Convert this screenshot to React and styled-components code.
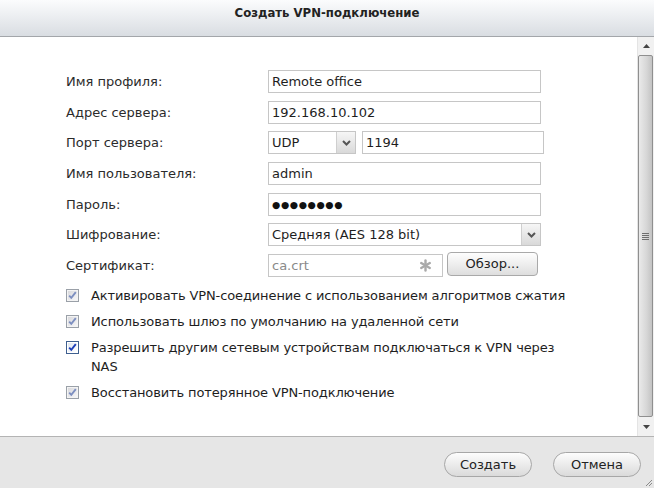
import React from "react";
import styled, { createGlobalStyle } from "styled-components";

const GlobalStyle = createGlobalStyle`
  html, body { margin: 0; padding: 0; width: 654px; height: 488px; overflow: hidden; background: #fff; }
  body { font-family: "DejaVu Sans", Verdana, sans-serif; font-size: 13px; color: #1e1e1e; }
  * { box-sizing: border-box; }
`;

const Dialog = styled.div`
  position: relative;
  width: 654px;
  height: 488px;
  display: flex;
  flex-direction: column;
`;

const TitleBar = styled.div`
  height: 37px;
  flex: none;
  border-bottom: 1px solid #a3a6aa;
  background: linear-gradient(#fbfcfd, #d9dde2);
  text-align: center;
  padding-top: 4px;
  line-height: 17px;
  font-family: "DejaVu Sans Condensed", "DejaVu Sans", sans-serif;
  font-stretch: condensed;
  font-weight: bold;
  font-size: 13px;
  color: #222;
`;

const Body = styled.div`
  height: 399px;
  flex: none;
  display: flex;
`;

const Content = styled.div`
  flex: 1;
  padding: 33px 0 0 66px;
`;

const Form = styled.div`
  display: grid;
  grid-template-columns: 202px auto;
  grid-auto-rows: 23px;
  row-gap: 7.67px;
`;

const Label = styled.div`
  line-height: 23px;
  color: #2b2b2b;
`;

const Field = styled.div`
  width: ${(p) => p.$w || 273}px;
  height: 23px;
  border: 1px solid #c6c6c6;
  background: #fff;
  padding: 0 ${(p) => (p.$muted ? 10 : 3)}px 0 3px;
  line-height: 21px;
  color: ${(p) => (p.$muted ? "#8a8a8a" : "#1e1e1e")};
  display: flex;
  align-items: center;
  justify-content: space-between;
`;

const Dots = styled.span`
  font-size: 9.5px;
  letter-spacing: 0.6px;
  color: #111;
`;

const Select = styled.div`
  width: ${(p) => p.$w}px;
  height: 23px;
  border: 1px solid #c6c6c6;
  background: #fff;
  display: flex;
  line-height: 21px;
`;

const SelectText = styled.div`
  flex: 1;
  padding-left: 3px;
`;

const ArrowBox = styled.div`
  width: 19px;
  flex: none;
  border-left: 1px solid #cfcfcf;
  background: linear-gradient(#f6f6f6, #d9d9d9);
  display: flex;
  align-items: center;
  justify-content: center;
`;

const Pair = styled.div`
  display: flex;
  gap: ${(p) => p.$gap}px;
  align-items: flex-start;
`;

const BrowseButton = styled.button`
  width: 91px;
  height: 24px;
  margin-top: -2px;
  border: 1px solid #a9a9a9;
  border-radius: 4px;
  background: linear-gradient(#fefefe, #dedede);
  font-family: inherit;
  font-size: 13px;
  color: #222;
  padding: 0;
`;

const Checks = styled.div`
  margin-top: 9.5px;
  display: flex;
  flex-direction: column;
  gap: 7px;
`;

const CheckRow = styled.div`
  display: flex;
  align-items: flex-start;
  gap: 12px;
`;

const BoxWrap = styled.div`
  margin-top: 3px;
  width: 13px;
  height: 13px;
  flex: none;
  display: flex;
`;

const CheckText = styled.div`
  width: 487px;
  line-height: 19px;
  letter-spacing: -0.12px;
  color: #1e1e1e;
`;

const Scrollbar = styled.div`
  width: 17px;
  flex: none;
  background: #f1f1f1;
  border-left: 1px solid #e4e4e4;
  display: flex;
  flex-direction: column;
`;

const ScrollArrow = styled.div`
  height: ${(p) => p.$h}px;
  flex: none;
  display: flex;
  align-items: center;
  justify-content: center;
`;

const Thumb = styled.div`
  flex: 1;
  width: 15px;
  border: 1px solid #8f8f8f;
  border-radius: 2px;
  background: linear-gradient(90deg, #eaeaea, #d6d6d6 60%, #c3c3c3);
  display: flex;
  align-items: center;
  justify-content: center;
`;

const Grip = styled.div`
  width: 7px;
  display: flex;
  flex-direction: column;
  gap: 1px;
  margin-left: -1px;
`;

const GripLine = styled.div`
  height: 1px;
  background: #6f6f6f;
`;

const Footer = styled.div`
  flex: 1;
  border-top: 1px solid #b4b4b4;
  background: #e6e6e6;
  display: flex;
  justify-content: flex-end;
  align-items: flex-start;
  gap: 21px;
  padding: 15px 13px 0 0;
`;

const PillButton = styled.button`
  width: ${(p) => p.$w}px;
  height: 25px;
  border: 1px solid #a7a7a7;
  border-radius: 13px;
  background: linear-gradient(#fdfdfd, #dadada);
  font-family: inherit;
  font-size: 13px;
  color: #222;
  padding: 0;
`;

const Corner = styled.div`
  position: absolute;
  right: 1px;
  bottom: 1px;
  width: 8px;
  height: 8px;
  display: flex;
`;

const Chevron = () => (
  <svg width="9" height="6" viewBox="0 0 9 6">
    <path d="M1 1 L4.5 4.5 L8 1" fill="none" stroke="#555" strokeWidth="2" />
  </svg>
);

const Asterisk = () => (
  <svg width="13" height="13" viewBox="0 0 13 13">
    <g stroke="#aaaaaa" strokeWidth="2.4" strokeLinecap="round">
      <line x1="6.5" y1="1.5" x2="6.5" y2="11.5" />
      <line x1="2.2" y1="4" x2="10.8" y2="9" />
      <line x1="2.2" y1="9" x2="10.8" y2="4" />
    </g>
  </svg>
);

const Checkbox = ({ active }) => (
  <svg width="13" height="13" viewBox="0 0 13 13">
    <defs>
      <linearGradient id={active ? "cba" : "cbi"} x1="0" y1="0" x2="1" y2="1">
        <stop offset="0" stopColor={active ? "#dfe6f0" : "#d9d9dc"} />
        <stop offset="1" stopColor={active ? "#ffffff" : "#f6f6f8"} />
      </linearGradient>
    </defs>
    <rect x="0.5" y="0.5" width="12" height="12" fill={active ? "#fff" : "#f4f4f4"} stroke={active ? "#3e5f8f" : "#9aa0a8"} />
    <rect x="2" y="2" width="9" height="9" fill={`url(#${active ? "cba" : "cbi"})`} />
    <path d="M3.2 6.6 L5.3 8.9 L9.8 3.2" fill="none" stroke={active ? "#1d3fb8" : "#7d8fc0"} strokeWidth="1.9" />
  </svg>
);

const options = [
  "Активировать VPN-соединение с использованием алгоритмов сжатия",
  "Использовать шлюз по умолчанию на удаленной сети",
  "Разрешить другим сетевым устройствам подключаться к VPN через NAS",
  "Восстановить потерянное VPN-подключение",
];

export default function App() {
  return (
    <Dialog>
      <GlobalStyle />
      <TitleBar>Создать VPN-подключение</TitleBar>
      <Body>
        <Content>
          <Form>
            <Label>Имя профиля:</Label>
            <Field>Remote office</Field>
            <Label>Адрес сервера:</Label>
            <Field>192.168.10.102</Field>
            <Label>Порт сервера:</Label>
            <Pair $gap={6}>
              <Select $w={88}>
                <SelectText>UDP</SelectText>
                <ArrowBox><Chevron /></ArrowBox>
              </Select>
              <Field $w={182}>1194</Field>
            </Pair>
            <Label>Имя пользователя:</Label>
            <Field>admin</Field>
            <Label>Пароль:</Label>
            <Field><Dots>●●●●●●●●</Dots></Field>
            <Label>Шифрование:</Label>
            <Select $w={273}>
              <SelectText>Средняя (AES 128 bit)</SelectText>
              <ArrowBox><Chevron /></ArrowBox>
            </Select>
            <Label>Сертификат:</Label>
            <Pair $gap={4}>
              <Field $w={175} $muted>
                <span>ca.crt</span>
                <Asterisk />
              </Field>
              <BrowseButton>Обзор...</BrowseButton>
            </Pair>
          </Form>
          <Checks>
            {options.map((t, i) => (
              <CheckRow key={i}>
                <BoxWrap><Checkbox active={i === 2} /></BoxWrap>
                <CheckText>{t}</CheckText>
              </CheckRow>
            ))}
          </Checks>
        </Content>
        <Scrollbar>
          <ScrollArrow $h={18}>
            <svg width="7" height="4" viewBox="0 0 7 4"><path d="M0 4 L3.5 0 L7 4 Z" fill="#444" /></svg>
          </ScrollArrow>
          <Thumb>
            <Grip>
              <GripLine /><GripLine /><GripLine /><GripLine />
            </Grip>
          </Thumb>
          <ScrollArrow $h={19}>
            <svg width="7" height="4" viewBox="0 0 7 4"><path d="M0 0 L3.5 4 L7 0 Z" fill="#444" /></svg>
          </ScrollArrow>
        </Scrollbar>
      </Body>
      <Footer>
        <PillButton $w={88}>Создать</PillButton>
        <PillButton $w={88}>Отмена</PillButton>
      </Footer>
      <Corner>
        <svg width="8" height="8" viewBox="0 0 8 8">
          <path d="M7 1 L1 7 M7 4 L4 7" stroke="#8a8a8a" strokeWidth="1" />
        </svg>
      </Corner>
    </Dialog>
  );
}
